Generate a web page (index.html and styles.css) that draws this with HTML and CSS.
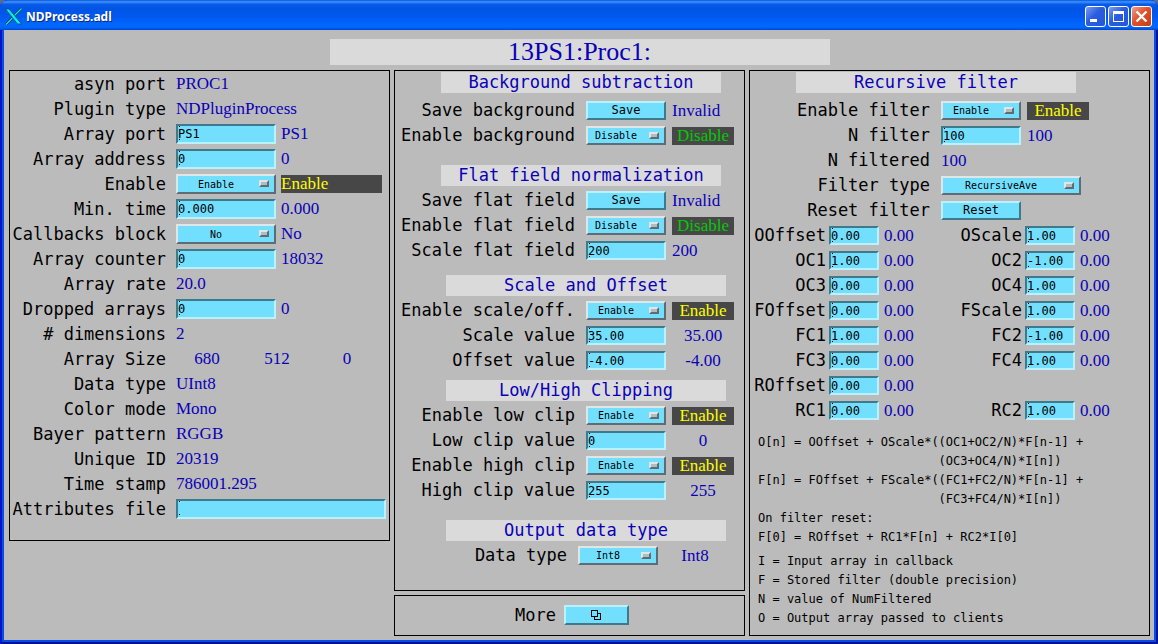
FILE: index.html
```html
<!DOCTYPE html>
<html lang="en">
<head>
<meta charset="utf-8">
<title>NDProcess.adl</title>
<link rel="stylesheet" href="styles.css">
</head>
<body>
<div class="window">
  <header class="titlebar">
    <svg class="app-icon" viewBox="0 0 17 17" width="17" height="17" aria-hidden="true">
      <path d="M16.500.5L9 8M7.500 10L1 16.500" stroke="#013048" stroke-width="2.600" fill="none"/>
      <path d="M16.500.5L9 8M7.500 10L1 16.500" stroke="#00f0f0" stroke-width="1.200" fill="none"/>
      <path d="M.5 1h3.500l12.500 15h-4z" fill="#00f0f0" stroke="#013048" stroke-width=".6"/>
    </svg>
    <span class="caption">NDProcess.adl</span>
    <button class="win-btn" aria-label="Minimize"><svg viewBox="0 0 19 19" width="19" height="19"><path d="M4 12h7v3H4z" fill="#fff"/></svg></button>
    <button class="win-btn" aria-label="Maximize"><svg viewBox="0 0 19 19" width="19" height="19"><path d="M4 4h11v11H4zM5 7v7h9V7z" fill="#fff" fill-rule="evenodd"/></svg></button>
    <button class="win-btn close" aria-label="Close"><svg viewBox="0 0 19 19" width="19" height="19"><path d="M4.500 4.500l10 10M14.500 4.500l-10 10" stroke="#fff" stroke-width="2.400" fill="none"/></svg></button>
  </header>
  <main class="content">
    <h1 class="title">13PS1:Proc1:</h1>
    <div class="columns">

      <section class="panel general">
        <div class="row"><span class="label">asyn port</span><output>PROC1</output></div>
        <div class="row"><span class="label">Plugin type</span><output>NDPluginProcess</output></div>
        <div class="row"><label class="label" for="port">Array port</label><input id="port" value="PS1"><output>PS1</output></div>
        <div class="row"><label class="label" for="addr">Array address</label><input id="addr" value="0"><output>0</output></div>
        <div class="row"><label class="label" for="en">Enable</label><span class="menu"><select id="en"><option>Enable</option><option>Disable</option></select></span><output class="state on">Enable</output></div>
        <div class="row"><label class="label" for="mint">Min. time</label><input id="mint" value="0.000"><output>0.000</output></div>
        <div class="row"><label class="label" for="cb">Callbacks block</label><span class="menu"><select id="cb"><option>No</option><option>Yes</option></select></span><output>No</output></div>
        <div class="row"><label class="label" for="cnt">Array counter</label><input id="cnt" value="0"><output>18032</output></div>
        <div class="row"><span class="label">Array rate</span><output>20.0</output></div>
        <div class="row"><label class="label" for="drop">Dropped arrays</label><input id="drop" value="0"><output>0</output></div>
        <div class="row"><span class="label"># dimensions</span><output>2</output></div>
        <div class="row"><span class="label">Array Size</span><div class="sizes"><output>680</output><output>512</output><output>0</output></div></div>
        <div class="row"><span class="label">Data type</span><output>UInt8</output></div>
        <div class="row"><span class="label">Color mode</span><output>Mono</output></div>
        <div class="row"><span class="label">Bayer pattern</span><output>RGGB</output></div>
        <div class="row"><span class="label">Unique ID</span><output>20319</output></div>
        <div class="row"><span class="label">Time stamp</span><output>786001.295</output></div>
        <div class="row"><label class="label" for="attr">Attributes file</label><input id="attr" class="wide" value=""></div>
      </section>

      <div class="middle">
        <section class="panel process">
          <div class="group first">
            <h2>Background subtraction</h2>
            <div class="row"><span class="label">Save background</span><button class="btn">Save</button><output>Invalid</output></div>
            <div class="row"><label class="label" for="ebg">Enable background</label><span class="menu"><select id="ebg"><option>Disable</option><option>Enable</option></select></span><output class="state off">Disable</output></div>
          </div>
          <div class="group">
            <h2>Flat field normalization</h2>
            <div class="row"><span class="label">Save flat field</span><button class="btn">Save</button><output>Invalid</output></div>
            <div class="row"><label class="label" for="eff">Enable flat field</label><span class="menu"><select id="eff"><option>Disable</option><option>Enable</option></select></span><output class="state off">Disable</output></div>
            <div class="row"><label class="label" for="sff">Scale flat field</label><input id="sff" value="200"><output>200</output></div>
          </div>
          <div class="group inset">
            <h2>Scale and Offset</h2>
            <div class="row"><label class="label" for="eso">Enable scale/off.</label><span class="menu"><select id="eso"><option>Enable</option><option>Disable</option></select></span><output class="state on">Enable</output></div>
            <div class="row"><label class="label" for="sv">Scale value</label><input id="sv" value="35.00"><output>35.00</output></div>
            <div class="row"><label class="label" for="ov">Offset value</label><input id="ov" value="-4.00"><output>-4.00</output></div>
          </div>
          <div class="group inset tight">
            <h2>Low/High Clipping</h2>
            <div class="row"><label class="label" for="elc">Enable low clip</label><span class="menu"><select id="elc"><option>Enable</option><option>Disable</option></select></span><output class="state on">Enable</output></div>
            <div class="row"><label class="label" for="lcv">Low clip value</label><input id="lcv" value="0"><output>0</output></div>
            <div class="row"><label class="label" for="ehc">Enable high clip</label><span class="menu"><select id="ehc"><option>Enable</option><option>Disable</option></select></span><output class="state on">Enable</output></div>
            <div class="row"><label class="label" for="hcv">High clip value</label><input id="hcv" value="255"><output>255</output></div>
          </div>
          <div class="group inset output">
            <h2>Output data type</h2>
            <div class="row"><label class="label" for="odt">Data type</label><span class="menu"><select id="odt"><option>Int8</option><option>UInt8</option></select></span><output>Int8</output></div>
          </div>
        </section>
        <section class="panel more">
          <span class="label">More</span>
          <button class="btn" aria-label="More"><svg viewBox="0 0 10 10" width="10" height="10" shape-rendering="crispEdges" stroke="#000"><path d="M3.500 3.500h6v6h-6z" fill="none"/><path d="M.5.5h6v6h-6z" fill="#73dfff"/></svg></button>
        </section>
      </div>

      <section class="panel filter">
        <div class="group first">
          <h2>Recursive filter</h2>
          <div class="row"><label class="label" for="ef">Enable filter</label><span class="menu"><select id="ef"><option>Enable</option><option>Disable</option></select></span><output class="state on">Enable</output></div>
          <div class="row"><label class="label" for="nf">N filter</label><input id="nf" value="100"><output>100</output></div>
          <div class="row"><span class="label">N filtered</span><output>100</output></div>
          <div class="row"><label class="label" for="ft">Filter type</label><span class="menu wide"><select id="ft"><option>RecursiveAve</option><option>Average</option></select></span></div>
          <div class="row"><span class="label">Reset filter</span><button class="btn">Reset</button></div>
        </div>
        <div class="coefs">
          <div class="coef"><label class="label" for="oo">OOffset</label><input id="oo" value="0.00"><output>0.00</output></div>
          <div class="coef"><label class="label" for="os">OScale</label><input id="os" value="1.00"><output>0.00</output></div>
          <div class="coef"><label class="label" for="oc1">OC1</label><input id="oc1" value="1.00"><output>0.00</output></div>
          <div class="coef"><label class="label" for="oc2">OC2</label><input id="oc2" value="-1.00"><output>0.00</output></div>
          <div class="coef"><label class="label" for="oc3">OC3</label><input id="oc3" value="0.00"><output>0.00</output></div>
          <div class="coef"><label class="label" for="oc4">OC4</label><input id="oc4" value="1.00"><output>0.00</output></div>
          <div class="coef"><label class="label" for="fo">FOffset</label><input id="fo" value="0.00"><output>0.00</output></div>
          <div class="coef"><label class="label" for="fs">FScale</label><input id="fs" value="1.00"><output>0.00</output></div>
          <div class="coef"><label class="label" for="fc1">FC1</label><input id="fc1" value="1.00"><output>0.00</output></div>
          <div class="coef"><label class="label" for="fc2">FC2</label><input id="fc2" value="-1.00"><output>0.00</output></div>
          <div class="coef"><label class="label" for="fc3">FC3</label><input id="fc3" value="0.00"><output>0.00</output></div>
          <div class="coef"><label class="label" for="fc4">FC4</label><input id="fc4" value="1.00"><output>0.00</output></div>
          <div class="coef"><label class="label" for="ro">ROffset</label><input id="ro" value="0.00"><output>0.00</output></div>
          <div></div>
          <div class="coef"><label class="label" for="rc1">RC1</label><input id="rc1" value="0.00"><output>0.00</output></div>
          <div class="coef"><label class="label" for="rc2">RC2</label><input id="rc2" value="1.00"><output>0.00</output></div>
        </div>
        <pre class="notes">O[n] = OOffset + OScale*((OC1+OC2/N)*F[n-1] +
                         (OC3+OC4/N)*I[n])
F[n] = FOffset + FScale*((FC1+FC2/N)*F[n-1] +
                         (FC3+FC4/N)*I[n])
On filter reset:
F[0] = ROffset + RC1*F[n] + RC2*I[0]</pre>
        <pre class="notes legend">I = Input array in callback
F = Stored filter (double precision)
N = value of NumFiltered
O = Output array passed to clients</pre>
      </section>
    </div>
  </main>
</div>
</body>
</html>
```
FILE: styles.css
```css
*, *::after { box-sizing: border-box; }

body {
  margin: 0;
  background: #5a6b8c;
  font-family: "DejaVu Sans Mono", "Liberation Mono", monospace;
  color: #000;
}

.window {
  min-height: 100vh;
  display: flex;
  flex-direction: column;
  background: #0a4be8;
  border-radius: 8px 8px 0 0;
  box-shadow: inset 2px 0 #0016c8, inset -2px 0 #001494, inset 0 -2px #001494;
  padding: 0 4px 4px;
}

.titlebar {
  display: flex;
  align-items: center;
  gap: 2px;
  height: 30px;
  margin: 0 -4px;
  padding: 3px 6px 0 5px;
  border-radius: 8px 8px 0 0;
  background: linear-gradient(#0a50d8 0, #3d95ff 6%, #0a5ae8 14%, #0055e5 30%, #0058ee 55%, #0068ff 82%, #0066fa 92%, #0044cc 100%);
}

.caption {
  flex: 1;
  margin-left: 2px;
  font: bold 12px/18px "Noto Sans", "Open Sans", sans-serif;
  color: #fff;
  text-shadow: 1px 1px #0a2a80;
}

.win-btn {
  width: 21px;
  height: 21px;
  padding: 0;
  border: 1px solid #fff;
  border-radius: 3px;
  background: linear-gradient(135deg, #7c9cf0, #2a5ce0 45%, #2458d8);
}

.win-btn svg { display: block; }
.win-btn.close { background: linear-gradient(135deg, #f0a08a, #e0502c 45%, #c83c10); }

.content {
  flex: 1;
  display: flex;
  flex-direction: column;
  background: #bbb;
  padding: 9px 4px 4px 5px;
}

.title {
  align-self: center;
  width: 500px;
  max-width: 100%;
  margin: 0 0 5px;
  background: #dadada;
  color: #0a00b8;
  font: 26px/26px "Liberation Serif", serif;
  text-align: center;
}

.columns {
  flex: 1;
  display: grid;
  grid-template-columns: 381fr 351fr 401fr;
  gap: 4px;
  align-items: stretch;
}

.panel { border: 1px solid #000; }
.general { align-self: start; padding-bottom: 19px; }
.middle { display: flex; flex-direction: column; gap: 4px; }
.process { flex: 1; }

.row {
  display: grid;
  grid-template-columns: 180px 80px 62px;
  column-gap: 6px;
  align-items: center;
  height: 25px;
  padding: 3px 0;
}

.row > :nth-child(n + 2) { margin-left: 5px; margin-right: -5px; }

.general .row {
  grid-template-columns: 156px 100px 101px;
  column-gap: 5px;
  padding-bottom: 2px;
}

.label {
  font-size: 17px;
  line-height: 19px;
  text-align: right;
  white-space: nowrap;
}

output {
  font: 17px/18px "Liberation Serif", serif;
  color: #0a00b8;
  white-space: nowrap;
}

.state { background: #474747; }
.on { color: #ff0; }
.off { color: #00cc00; }
.process .state, .filter .state, .inset output { text-align: center; }

input, select, .btn {
  height: 19px;
  margin: 0;
  padding: 0;
  border: 2px solid;
  border-radius: 0;
  background-color: #73dfff;
  color: #000;
  font-family: inherit;
}

.general input, .general select { height: 20px; }

input {
  min-width: 0;
  border-color: #3f7a8c #b9f1ff #b9f1ff #3f7a8c;
  background-image: linear-gradient(#000, #000), linear-gradient(#000, #000);
  background-size: 1px 1px;
  background-position: 1px 0, 1px 13px;
  background-repeat: no-repeat;
  font-size: 12px;
}

.row > .wide { width: 210px; }
.row > .menu.wide { width: 140px; }

.btn {
  border-color: #b9f1ff #3f7a8c #3f7a8c #b9f1ff;
  font-size: 12px;
  line-height: 15px;
}

.menu { position: relative; display: block; }

select {
  display: block;
  width: 100%;
  appearance: none;
  padding-right: 20px;
  border-color: #dfe6e8 #5f6c74 #5f6c74 #dfe6e8;
  font-size: 10px;
  text-align: center;
  text-align-last: center;
}

/* Option-menu indicator drawn over the right end of the select. */
.menu::after {
  content: "";
  position: absolute;
  right: 7px;
  top: 6px;
  width: 10px;
  height: 7px;
  border: 2px solid;
  border-color: #e0e6e8 #5f6c74 #5f6c74 #e0e6e8;
  background: #b0bcc0;
  pointer-events: none;
}

.sizes {
  display: grid;
  grid-template-columns: 62px 62px 62px;
  gap: 8px;
  text-align: center;
}

h2 {
  width: 280px;
  margin: 0 0 2px 46px;
  background: #dadada;
  color: #0a00b8;
  font-size: 17px;
  font-weight: normal;
  line-height: 21px;
  text-align: center;
}

.group { margin-top: 17px; }
.group.first { margin-top: 1px; }
.first h2 { margin-bottom: 5px; }
.inset { margin-top: 12px; }
.inset h2 { margin-left: 51px; }
.inset.tight { margin-top: 7px; }
.inset.output { margin-top: 17px; }
.output .row { grid-template-columns: 172px 80px 62px; }

.more {
  display: flex;
  align-items: center;
  gap: 8px;
  height: 41px;
  padding: 0 0 1px 120px;
}

.more .btn { width: 65px; height: 20px; }
.more svg { display: block; margin: 0 auto; }

.coefs {
  display: grid;
  grid-template-columns: 196px 196px;
}

.coef {
  display: grid;
  grid-template-columns: 76px 50px 40px;
  column-gap: 3px;
  align-items: center;
  height: 25px;
  padding: 3px 0;
}

.coef output { margin-left: 2px; }

.notes {
  margin: 10px 0 0 8px;
  font: 12px/19px "DejaVu Sans Mono", monospace;
}

.notes.legend { margin-top: 5px; }
```
